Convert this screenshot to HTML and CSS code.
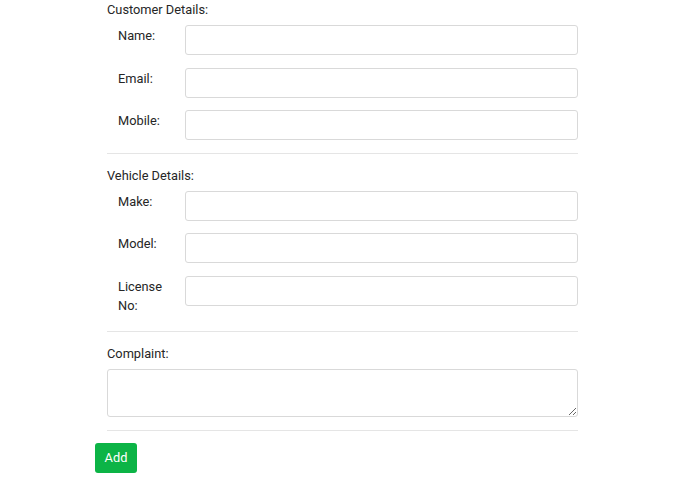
FILE: index.html
```html
<!DOCTYPE html>
<html>
<head>
<meta charset="utf-8">
<link rel="stylesheet" href="styles.css">
</head>
<body>
<form class="form">
  <div class="section">
    <div class="section-title">Customer Details:</div>
    <div class="row"><label class="lbl">Name:</label><input class="inp" type="text"></div>
    <div class="row"><label class="lbl">Email:</label><input class="inp" type="text"></div>
    <div class="row"><label class="lbl">Mobile:</label><input class="inp" type="text"></div>
  </div>
  <hr class="sep">
  <div class="section">
    <div class="section-title">Vehicle Details:</div>
    <div class="row"><label class="lbl">Make:</label><input class="inp" type="text"></div>
    <div class="row"><label class="lbl">Model:</label><input class="inp" type="text"></div>
    <div class="row"><label class="lbl">License No:</label><input class="inp" type="text"></div>
  </div>
  <hr class="sep">
  <div class="section">
    <div class="section-title">Complaint:</div>
    <textarea class="ta"></textarea>
  </div>
  <hr class="sep">
  <button type="button" class="btn">Add</button>
</form>
</body>
</html>
```
FILE: styles.css
```css
html, body {
  margin: 0;
  padding: 0;
  background: #fff;
}
body {
  font-family: Roboto, "Liberation Sans", sans-serif;
  font-size: 12.8px;
  color: #262626;
  line-height: 20px;
}
.form {
  width: 483px;
  margin-left: 95px;
}
.section {
  margin-left: 12px;
  width: 471px;
}
.section-title {
  margin-bottom: 5px;
}
.row {
  display: flex;
  align-items: flex-start;
  margin-bottom: 12.5px;
}
.lbl {
  width: 78px;
  box-sizing: border-box;
  padding: 1px 12px 4px 11px;
  flex: none;
  line-height: 19px;
}
.inp {
  flex: 1;
  height: 30px;
  box-sizing: border-box;
  border: 1px solid #d9d9d9;
  border-radius: 3px;
  margin: 0;
  padding: 4px 8px;
  font: inherit;
}
.sep {
  margin: 0 0 12px 12px;
  width: 471px;
  border: 0;
  border-top: 1px solid #e5e5e5;
  height: 0;
}
.ta {
  display: block;
  width: 471px;
  height: 48px;
  box-sizing: border-box;
  border: 1px solid #d9d9d9;
  border-radius: 3px;
  margin: 1.5px 0 12.5px 0;
  font: inherit;
}
.btn {
  display: block;
  background: #0cb446;
  color: #fff;
  border: 0;
  border-radius: 3px;
  font: inherit;
  height: 30px;
  width: 42px;
  padding: 0;
}
```
